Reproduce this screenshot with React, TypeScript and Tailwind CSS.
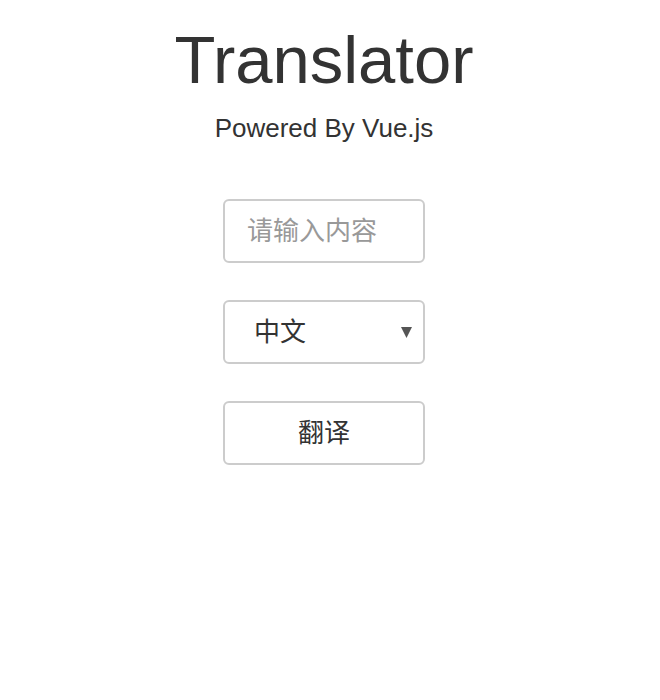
import React from "react";

export default function App() {
  return (
    <div
      className="w-[648px] bg-white flex flex-col items-center text-[#333]"
      style={{ fontFamily: '"Liberation Sans", "Noto Sans CJK SC", sans-serif' }}
    >
      <h1 className="mt-[26px] text-[67px] leading-[67px] font-normal">Translator</h1>
      <p className="mt-[22px] text-[26px] leading-[26px]">Powered By Vue.js</p>
      <div className="mt-[58px] flex flex-col gap-[37px]">
        <input
          placeholder="请输入内容"
          className="w-[202px] h-[64px] border-2 border-[#ccc] rounded-[6px] pl-[22px] text-[26px] outline-none placeholder:text-[#999] text-[#333]"
        />
        <div className="relative w-[202px] h-[64px]">
          <select className="w-full h-full appearance-none border-2 border-[#ccc] rounded-[6px] pl-[29px] text-[26px] text-[#333] bg-white outline-none">
            <option>中文</option>
            <option>English</option>
          </select>
          <svg
            className="absolute left-[178px] top-[27px] pointer-events-none"
            width="11"
            height="11"
            viewBox="0 0 11 11"
          >
            <polygon points="0,0 11,0 5.5,11" fill="#555" />
          </svg>
        </div>
        <button className="w-[202px] h-[64px] border-2 border-[#ccc] rounded-[6px] text-[26px] text-[#333] bg-white">
          翻译
        </button>
      </div>
      <div className="h-[235px]" />
    </div>
  );
}
